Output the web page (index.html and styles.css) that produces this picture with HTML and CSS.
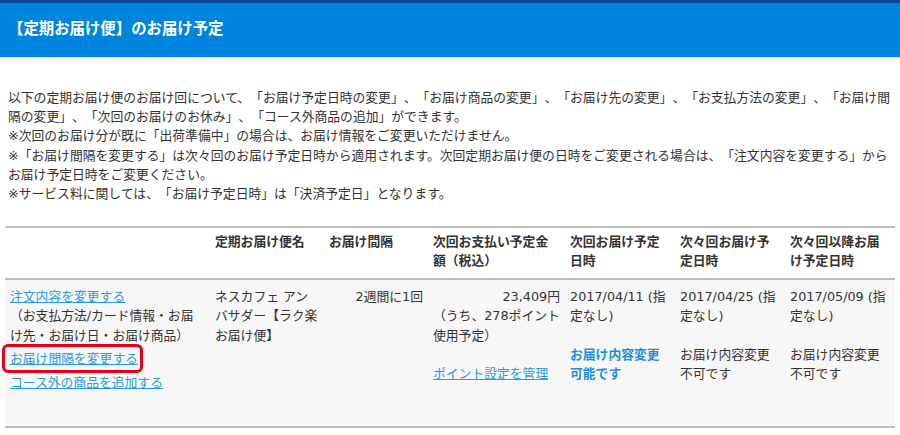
FILE: index.html
```html
<!DOCTYPE html>
<html lang="ja">
<head>
<meta charset="utf-8">
<title>【定期お届け便】のお届け予定</title>
<link rel="stylesheet" href="styles.css">
</head>
<body>
<header class="page-head">
  <h1 class="page-title">【定期お届け便】のお届け予定</h1>
</header>
<main class="content">
  <div class="notes">
    <p>以下の定期お届け便のお届け回について、「お届け予定日時の変更」、「お届け商品の変更」、「お届け先の変更」、「お支払方法の変更」、「お届け間隔の変更」、「次回のお届けのお休み」、「コース外商品の追加」ができます。</p>
    <p>※次回のお届け分が既に「出荷準備中」の場合は、お届け情報をご変更いただけません。</p>
    <p>※「お届け間隔を変更する」は次々回のお届け予定日時から適用されます。次回定期お届け便の日時をご変更される場合は、「注文内容を変更する」からお届け予定日時をご変更ください。</p>
    <p>※サービス料に関しては、「お届け予定日時」は「決済予定日」となります。</p>
  </div>
  <table class="schedule">
    <thead>
      <tr>
        <th class="c-actions"></th>
        <th class="c-name">定期お届け便名</th>
        <th class="c-interval">お届け間隔</th>
        <th class="c-amount">次回お支払い予定金額（税込）</th>
        <th class="c-date">次回お届け予定日時</th>
        <th class="c-date">次々回お届け予定日時</th>
        <th class="c-date">次々回以降お届け予定日時</th>
      </tr>
    </thead>
    <tbody>
      <tr>
        <td>
          <p><a href="#" class="link">注文内容を変更する</a><br>（お支払方法/カード情報・お届け先・お届け日・お届け商品）</p>
          <p class="link-row"><span class="highlight"><a href="#" class="link">お届け間隔を変更する</a></span></p>
          <p class="link-row"><a href="#" class="link">コース外の商品を追加する</a></p>
        </td>
        <td>ネスカフェ アンバサダー【ラク楽お届け便】</td>
        <td class="right">2週間に1回</td>
        <td>
          <p class="right">23,409円</p>
          <p>（うち、278ポイント使用予定）</p>
          <p class="gap"><a href="#" class="link">ポイント設定を管理</a></p>
        </td>
        <td>
          <p>2017/04/11 (指定なし)</p>
          <p class="gap status-ok">お届け内容変更可能です</p>
        </td>
        <td>
          <p>2017/04/25 (指定なし)</p>
          <p class="gap">お届け内容変更不可です</p>
        </td>
        <td>
          <p>2017/05/09 (指定なし)</p>
          <p class="gap">お届け内容変更不可です</p>
        </td>
      </tr>
    </tbody>
  </table>
</main>
</body>
</html>
```
FILE: styles.css
```css
* { box-sizing: border-box; }
html, body { margin: 0; padding: 0; background: #fff; }
body {
  font-family: "DejaVu Sans", "Noto Sans CJK JP", sans-serif;
  font-size: 12.8px;
  line-height: 19.2px;
  color: #333;
  text-spacing-trim: space-all;
}
p { margin: 0; }

.page-head {
  border-top: 3px solid #0b4798;
  background: #0085df;
  border-bottom: 1px solid #d4e3f1;
  height: 58px;
  padding: 0 8px;
  display: flex;
  align-items: center;
}
.page-title {
  margin: 0;
  color: #fff;
  font-size: 15.4px;
  font-weight: bold;
  line-height: 20px;
  padding-bottom: 2px;
}

.content { padding: 30px 5px 0; }
.notes { padding: 0 3px; width: 890px; }

.schedule {
  margin-top: 23px;
  width: 890px;
  border-collapse: collapse;
  table-layout: fixed;
}
.schedule th, .schedule td {
  padding: 0 5px;
  text-align: left;
  vertical-align: top;
}
.schedule th {
  font-weight: bold;
  padding-top: 4px;
  padding-bottom: 7px;
  border-top: 2px solid #bdbdbd;
  border-bottom: 2px solid #bdbdbd;
  background: #fff;
}
.schedule td {
  background: #f7f7f7;
  padding-top: 7.5px;
  height: 148px;
  border-bottom: 2px solid #bdbdbd;
}
.c-actions { width: 205px; }
.c-name { width: 114px; }
.c-interval { width: 104px; }
.c-amount { width: 137px; }
.c-date { width: 110px; }

.schedule td.right, .schedule .right { text-align: right; }

.link { color: #2a9ae4; text-decoration: underline; }
.link-row { margin-top: 4.5px; }
.gap { margin-top: 19.2px; }
.status-ok { color: #1e8de0; font-weight: bold; }

.highlight { position: relative; display: inline-block; }
.highlight::after {
  content: "";
  position: absolute;
  top: -5px;
  bottom: -5px;
  left: -8px;
  right: -5px;
  border: 3px solid #e4001b;
  border-radius: 6px;
  pointer-events: none;
}
```
